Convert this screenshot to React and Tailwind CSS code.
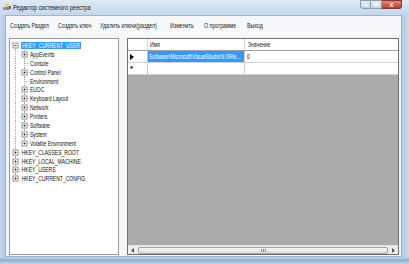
import React from "react";

// squeezed text: the screenshot is horizontally compressed
function T({ children, className = "" }) {
  return (
    <span className={"inline-block origin-left scale-x-[0.72] whitespace-nowrap leading-none " + className}>
      {children}
    </span>
  );
}

const menu = [
  { label: "Создать Раздел", w: "w-[48px]" },
  { label: "Создать ключ", w: "w-[42px]" },
  { label: "Удалить ключи(раздел)", w: "w-[70px]" },
  { label: "Изменить", w: "w-[34px]" },
  { label: "О программе", w: "w-[43px]" },
  { label: "Выход", w: "w-[30px]" },
];

const children = [
  { name: "AppEvents", plus: true },
  { name: "Console", plus: false },
  { name: "Control Panel", plus: true },
  { name: "Environment", plus: false },
  { name: "EUDC", plus: true },
  { name: "Keyboard Layout", plus: true },
  { name: "Network", plus: true },
  { name: "Printers", plus: true },
  { name: "Software", plus: true },
  { name: "System", plus: true },
  { name: "Volatile Environment", plus: true },
];

const roots = ["HKEY_CLASSES_ROOT", "HKEY_LOCAL_MACHINE", "HKEY_USERS", "HKEY_CURRENT_CONFIG"];

const LINE = "#a6a6a6";

function Box({ x, open }) {
  return (
    <g>
      <rect x={x} y={2} width={5} height={5} fill="#fff" stroke="#919191" strokeWidth={1} />
      <line x1={x + 1.5} y1={4.5} x2={x + 3.5} y2={4.5} stroke="#333" strokeWidth={1} />
      {!open && <line x1={x + 2.5} y1={3.5} x2={x + 2.5} y2={5.5} stroke="#333" strokeWidth={1} />}
    </g>
  );
}

function RootGlyph({ first, last, open }) {
  return (
    <svg width="11" height="9" className="shrink-0">
      <line x1={5.5} y1={first ? 4.5 : 0} x2={5.5} y2={last ? 4.5 : 9} stroke={LINE} strokeDasharray="1 1" />
      <line x1={5.5} y1={4.5} x2={10} y2={4.5} stroke={LINE} strokeDasharray="1 1" />
      <Box x={3} open={open} />
    </svg>
  );
}

function ChildGlyph({ last, plus }) {
  return (
    <svg width="20" height="9" className="shrink-0">
      <line x1={5.5} y1={0} x2={5.5} y2={9} stroke={LINE} strokeDasharray="1 1" />
      <line x1={14.5} y1={0} x2={14.5} y2={last ? 4.5 : 9} stroke={LINE} strokeDasharray="1 1" />
      <line x1={14.5} y1={4.5} x2={19} y2={4.5} stroke={LINE} strokeDasharray="1 1" />
      {plus && <Box x={12} open={false} />}
    </svg>
  );
}

function TreeView() {
  return (
    <div className="w-[110px] h-full border border-[#8e9aa8] bg-white pt-[2px]">
      <div className="flex items-center h-[8.9px]">
        <RootGlyph first open />
        <div className="bg-[#3399ff] h-[7px] w-[60px] flex items-center pl-[1px]">
          <T className="text-white">HKEY_CURRENT_USER</T>
        </div>
      </div>
      {children.map((c, i) => (
        <div key={c.name} className="flex items-center h-[8.9px]">
          <ChildGlyph plus={c.plus} last={i === children.length - 1} />
          <T className="text-[#111]">{c.name}</T>
        </div>
      ))}
      {roots.map((r, i) => (
        <div key={r} className="flex items-center h-[8.9px]">
          <RootGlyph last={i === roots.length - 1} />
          <T className="text-[#111] pl-[1px]">{r}</T>
        </div>
      ))}
    </div>
  );
}

function DataGrid() {
  return (
    <div className="w-[272px] h-full border border-[#6f6f6f] flex flex-col bg-[#ababab]">
      {/* header */}
      <div className="flex h-[12px] bg-white border-b border-[#a0a0a0]">
        <div className="w-[20px] border-r border-[#d5d5d5]" />
        <div className="w-[97px] border-r border-[#d5d5d5] flex items-center pl-[2px]">
          <T className="text-[#222]">Имя</T>
        </div>
        <div className="flex-1 flex items-center pl-[3px]">
          <T className="text-[#222]">Значение</T>
        </div>
      </div>
      {/* row 1 */}
      <div className="flex h-[12px] bg-white border-b border-[#d0d0d0]">
        <div className="w-[20px] border-r border-[#c8c8c8] flex items-center pl-[2px]">
          <svg width="4" height="6">
            <polygon points="0,0 4,3 0,6" fill="#000" />
          </svg>
        </div>
        <div className="w-[97px] border-r border-[#d0d0d0] bg-[#3399ff] flex items-center pl-[1px] overflow-hidden">
          <T className="text-white">Software\Microsoft\VisualStudio\9.0\Re...</T>
        </div>
        <div className="flex-1 flex items-center pl-[2px]">
          <T className="text-[#111]">0</T>
        </div>
      </div>
      {/* new row */}
      <div className="flex h-[12px] bg-white border-b border-[#d0d0d0]">
        <div className="w-[20px] border-r border-[#c8c8c8] flex items-center pl-[2px]">
          <span className="text-[8px] leading-none font-bold text-black">*</span>
        </div>
        <div className="w-[97px] border-r border-[#d0d0d0]" />
        <div className="flex-1" />
      </div>
      <div className="flex-1" />
      {/* horizontal scrollbar */}
      <div className="h-[9px] flex bg-[#ececec] border-t border-[#e3e3e3]">
        <div className="w-[9px] flex items-center justify-center">
          <svg width="3" height="5">
            <polygon points="3,0 0,2.5 3,5" fill="#555" />
          </svg>
        </div>
        <div className="flex-1 flex items-center px-[1px]">
          <div className="flex-1 h-[7px] rounded-[2px] border border-[#9ea4ab] bg-gradient-to-b from-[#f6f6f6] to-[#dcdcdc] flex items-center justify-center">
            <div className="flex gap-[1px]">
              <div className="w-[1px] h-[3px] bg-[#7c8896]" />
              <div className="w-[1px] h-[3px] bg-[#7c8896]" />
              <div className="w-[1px] h-[3px] bg-[#7c8896]" />
            </div>
          </div>
        </div>
        <div className="w-[9px] flex items-center justify-center">
          <svg width="3" height="5">
            <polygon points="0,0 3,2.5 0,5" fill="#555" />
          </svg>
        </div>
      </div>
    </div>
  );
}

function WindowButtons() {
  return (
    <div className="flex h-[10px] self-start mr-[7px]">
      <div className="w-[11px] h-[9px] rounded-bl-[3px] border border-[#8a9bb1] bg-gradient-to-b from-[#e9eff7] to-[#c6d3e3] flex items-end justify-center pb-[2px]">
        <div className="w-[4px] h-[1px] bg-white" />
      </div>
      <div className="w-[11px] h-[9px] border border-l-0 border-[#8a9bb1] bg-gradient-to-b from-[#e9eff7] to-[#c6d3e3] flex items-center justify-center">
        <div className="w-[4px] h-[3px] border border-white" />
      </div>
      <div className="w-[20px] h-[9px] rounded-br-[3px] border border-l-0 border-[#7c3a33] bg-gradient-to-b from-[#e2877a] to-[#c0392b] flex items-center justify-center">
        <span className="text-[7px] leading-none font-bold text-white font-['Liberation_Sans',sans-serif]">x</span>
      </div>
    </div>
  );
}

export default function App() {
  return (
    <div className="w-[409px] h-[264px] flex flex-col bg-[#bcd2ea] font-['Liberation_Sans',Arial,sans-serif] text-[7px] overflow-hidden">
      {/* title bar */}
      <div className="h-[15px] flex items-center bg-gradient-to-b from-[#dfeaf6] to-[#c2d6ec]">
        <svg width="8" height="7" className="ml-[3px] shrink-0">
          <rect x="0" y="3" width="3" height="3" fill="#d08b2c" />
          <rect x="3" y="0" width="3" height="3" fill="#e9c15a" />
          <rect x="3" y="3" width="3" height="3" fill="#5b8ccf" />
          <rect x="6" y="2" width="2" height="3" fill="#9c5d2a" />
        </svg>
        <div className="ml-[2px] flex-1 flex items-center">
          <span className="inline-block origin-left scale-x-[0.8] whitespace-nowrap leading-none text-[#1b1b1b]">
            Редактор системного реестра
          </span>
        </div>
        <WindowButtons />
      </div>

      <div className="flex-1 flex">
        <div className="w-[5px] bg-gradient-to-r from-[#c7d9ec] to-[#b3c9e2]" />
        <div className="w-[397px] flex flex-col bg-[#f4f5f7] border border-[#a2b4ca]">
          {/* menu */}
          <div className="h-[18px] flex items-center pl-[4px] bg-[#f6f8fb]">
            {menu.map((m) => (
              <div key={m.label} className={m.w + " flex items-center"}>
                <T className="text-[#1a1a1a] scale-x-[0.75]">{m.label}</T>
              </div>
            ))}
          </div>
          <div className="flex-1 flex gap-[8px] pt-[4px] pl-[3px] pr-[2px] pb-[1px]">
            <TreeView />
            <DataGrid />
          </div>
        </div>
        <div className="w-[7px] bg-gradient-to-r from-[#b3c9e2] to-[#c9dbee]" />
      </div>

      <div className="h-[7px] bg-gradient-to-b from-[#bed3ea] via-[#8fb0d6] to-[#c4d7ec]" />
    </div>
  );
}
